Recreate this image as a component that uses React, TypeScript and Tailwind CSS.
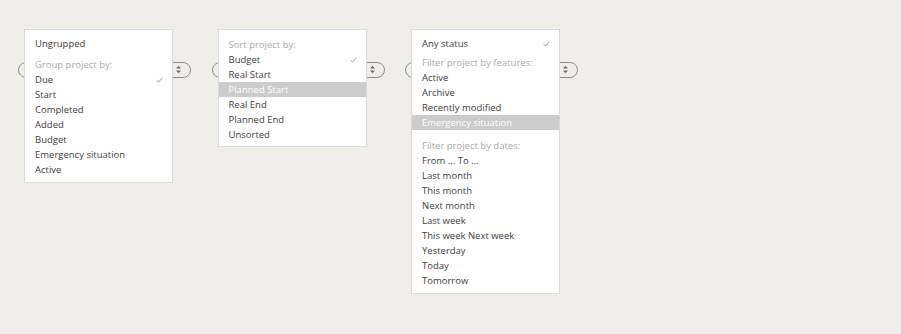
import React from "react";

type Item = { label: string; kind?: "header" | "item"; checked?: boolean; active?: boolean; gapBefore?: number };

const Check = () => (
  <svg width="7" height="6" viewBox="0 0 7 6" className="absolute right-[9px] top-[5px]">
    <path d="M0.6 3.2 L2.5 5 L6.4 0.8" fill="none" stroke="#8a8a8a" strokeWidth="0.9" />
  </svg>
);

const Arrows = () => (
  <svg width="7" height="9" viewBox="0 0 7 9" className="absolute right-[8px] top-[2px]">
    <path d="M3.5 0.8 L6 3.5 L1 3.5 Z" fill="#6a6a6a" />
    <path d="M3.5 8.2 L6 5.5 L1 5.5 Z" fill="#6a6a6a" />
  </svg>
);

function Row({ item }: { item: Item }) {
  const base = "relative h-[15px] leading-[15px] px-[10px] whitespace-nowrap";
  const color = item.kind === "header" ? "text-[#aaaaaa]" : item.active ? "text-white bg-[#cccccc]" : "text-[#404040]";
  return (
    <div className={`${base} ${color}`} style={item.gapBefore ? { marginTop: item.gapBefore } : undefined}>
      {item.label}
      {item.checked && <Check />}
    </div>
  );
}

function Menu({ items, pt = 6, pb = 5 }: { items: Item[]; pt?: number; pb?: number }) {
  return (
    <div className="relative w-[173px] shrink-0">
      <div className="absolute left-0 top-[33px] h-[16px] w-[173px] rounded-full border border-[#8c8c8c]">
        <Arrows />
      </div>
      <div
        className="relative z-10 ml-[6px] w-[149px] border border-[#dadada] bg-white"
        style={{ paddingTop: pt, paddingBottom: pb }}
      >
        {items.map((it, i) => (
          <Row key={i} item={it} />
        ))}
      </div>
    </div>
  );
}

export default function App() {
  const group: Item[] = [
    { label: "Ungrupped" },
    { label: "Group project by:", kind: "header", gapBefore: 6 },
    { label: "Due", checked: true },
    { label: "Start" },
    { label: "Completed" },
    { label: "Added" },
    { label: "Budget" },
    { label: "Emergency situation" },
    { label: "Active" },
  ];
  const sort: Item[] = [
    { label: "Sort project by:", kind: "header" },
    { label: "Budget", checked: true },
    { label: "Real Start" },
    { label: "Planned Start", active: true },
    { label: "Real End" },
    { label: "Planned End" },
    { label: "Unsorted" },
  ];
  const filter: Item[] = [
    { label: "Any status", checked: true },
    { label: "Filter project by features:", kind: "header", gapBefore: 4 },
    { label: "Active" },
    { label: "Archive" },
    { label: "Recently modified" },
    { label: "Emergency situation", active: true },
    { label: "Filter project by dates:", kind: "header", gapBefore: 8 },
    { label: "From ... To ..." },
    { label: "Last month" },
    { label: "This month" },
    { label: "Next month" },
    { label: "Last week" },
    { label: "This week Next week" },
    { label: "Yesterday" },
    { label: "Today" },
    { label: "Tomorrow" },
  ];
  return (
    <div
      className="h-[334px] w-full bg-[#efeeea] pl-[18px] pt-[29px] text-[9.5px]"
      style={{ fontFamily: '"Open Sans", "Noto Sans", sans-serif' }}
    >
      <div className="flex items-start gap-[20.5px]">
        <Menu items={group} pt={6} pb={5} />
        <Menu items={sort} pt={7} pb={4} />
        <Menu items={filter} pt={6} pb={5} />
      </div>
    </div>
  );
}
